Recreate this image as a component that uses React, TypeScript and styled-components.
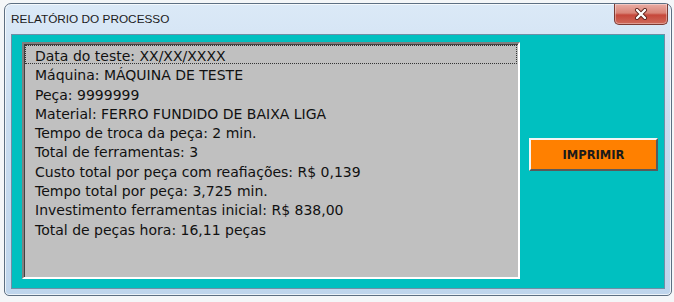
import React from "react";
import styled, { createGlobalStyle } from "styled-components";

const Global = createGlobalStyle`
  html, body { margin: 0; padding: 0; }
  body {
    width: 674px; height: 302px; overflow: hidden;
    background: #f4f6f8;
    font-family: "DejaVu Sans", sans-serif;
  }
`;

const Desk = styled.div`
  width: 674px;
  height: 302px;
  padding: 3px 3px 6px 4px;
  box-sizing: border-box;
  display: flex;
`;

const Window = styled.div`
  flex: 1;
  display: flex;
  flex-direction: column;
  border: 1px solid #5d6f82;
  border-radius: 7px 7px 5px 5px;
  background: linear-gradient(180deg, #dbe9f7 0%, #c9dcef 40%, #bfd5ec 100%);
  box-shadow: inset 0 0 0 1px rgba(255,255,255,0.7);
  padding: 0 6px 6px 6px;
`;

const TitleBar = styled.div`
  height: 30px;
  display: flex;
  align-items: flex-start;
  justify-content: space-between;
`;

const Title = styled.span`
  font-family: "Liberation Sans", "Noto Sans", sans-serif;
  font-size: 11.8px;
  color: #1b1b1b;
  margin-top: 8px;
`;

const CloseBtn = styled.div`
  width: 52px;
  height: 20px;
  margin-right: -3px;
  border: 1px solid #7a3a32;
  border-top: none;
  border-radius: 0 0 5px 5px;
  background: linear-gradient(180deg, #e9aba3 0%, #d98477 45%, #c6473a 55%, #cf6a5b 100%);
  display: flex;
  align-items: center;
  justify-content: center;
  box-shadow: inset 0 0 0 1px rgba(255,255,255,0.35);
`;

const Client = styled.div`
  flex: 1;
  display: flex;
  align-items: flex-start;
  gap: 9px;
  background: #00c0c0;
  border: 1px solid #6f8fa6;
  padding: 7px 6px 9px 10px;
`;

const ListBox = styled.div`
  width: 498px;
  height: 237px;
  box-sizing: border-box;
  background: #c0c0c0;
  border-top: 2px solid #808080;
  border-left: 2px solid #808080;
  border-right: 2px solid #ffffff;
  border-bottom: 2px solid #ffffff;
  box-shadow: inset 1px 1px 0 #404040;
  padding: 1px 1px;
`;

const Item = styled.div<{ $focus?: boolean }>`
  height: 19.3px;
  line-height: 22px;
  padding-left: 10px;
  font-size: 14px;
  color: #111;
  white-space: nowrap;
  box-sizing: border-box;
  outline: ${(p) => (p.$focus ? "1px dotted #333" : "none")};
  outline-offset: -1px;
`;

const Side = styled.div`
  flex: 1;
  display: flex;
  justify-content: center;
  padding-top: 96px;
`;

const PrintButton = styled.button`
  width: 129px;
  height: 33px;
  background: #ff8000;
  border-top: 2px solid #f4f4f4;
  border-left: 2px solid #f4f4f4;
  border-right: 2px solid #5a5a5a;
  border-bottom: 2px solid #5a5a5a;
  font-family: "DejaVu Sans", sans-serif;
  font-weight: bold;
  font-size: 11.5px;
  color: #1a1a1a;
  padding: 0;
  cursor: pointer;
`;

const lines = [
  "Data do teste: XX/XX/XXXX",
  "Máquina: MÁQUINA DE TESTE",
  "Peça: 9999999",
  "Material: FERRO FUNDIDO DE BAIXA LIGA",
  "Tempo de troca da peça: 2 min.",
  "Total de ferramentas: 3",
  "Custo total por peça com reafiações: R$ 0,139",
  "Tempo total por peça: 3,725 min.",
  "Investimento ferramentas inicial: R$ 838,00",
  "Total de peças hora: 16,11 peças",
];

export default function App() {
  return (
    <>
      <Global />
      <Desk>
        <Window>
          <TitleBar>
            <Title>RELATÓRIO DO PROCESSO</Title>
            <CloseBtn>
              <svg width="14" height="12" viewBox="0 0 14 12">
                <path d="M3 2 L11 10 M11 2 L3 10" stroke="#5a1f18" strokeWidth="4" strokeLinecap="round" />
                <path d="M3 2 L11 10 M11 2 L3 10" stroke="#ffffff" strokeWidth="2.4" strokeLinecap="round" />
              </svg>
            </CloseBtn>
          </TitleBar>
          <Client>
            <ListBox>
              {lines.map((l, i) => (
                <Item key={i} $focus={i === 0}>{l}</Item>
              ))}
            </ListBox>
            <Side>
              <PrintButton>IMPRIMIR</PrintButton>
            </Side>
          </Client>
        </Window>
      </Desk>
    </>
  );
}
